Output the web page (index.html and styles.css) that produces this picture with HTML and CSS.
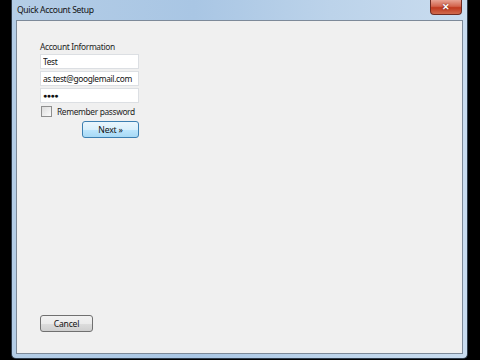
FILE: index.html
```html
<!DOCTYPE html>
<html lang="en">
<head>
    <meta charset="UTF-8">
    <title>Quick Account Setup</title>
    <link rel="stylesheet" href="styles.css">
</head>
<body>
    <div class="window">
        <div class="titlebar">
            <span class="title">Quick Account Setup</span>
            <button class="close-button">&#x2715;</button>
        </div>
        <div class="client">
            <div class="form">
                <div class="label">Account Information</div>
                <input type="text" class="field" value="Test">
                <input type="text" class="field" value="as.test@googlemail.com">
                <input type="text" class="field password" value="&#x25CF;&#x25CF;&#x25CF;&#x25CF;">
                <label class="remember"><span class="checkbox"></span>Remember password</label>
                <div class="actions">
                    <button class="win-button next-button">Next &raquo;</button>
                </div>
            </div>
            <div class="footer">
                <button class="win-button cancel-button">Cancel</button>
            </div>
        </div>
    </div>
</body>
</html>
```

FILE: styles.css
```css
body {
    margin: 0;
    padding: 0;
    background-color: #000;
    font-family: "Noto Sans", "Open Sans", sans-serif;
    font-size: 8.4px;
    letter-spacing: -0.35px;
    color: #1e1e1e;
    height: 360px;
    overflow: hidden;
}

.window {
    margin-left: 11px;
    width: 457px;
    height: 359px;
    box-sizing: border-box;
    border: 1px solid #2e3b4a;
    border-top: none;
    border-radius: 0 0 5px 5px;
    background: linear-gradient(90deg, #b4cde6, #a9c6e4 40%, #bcd3ea 70%, #c9dcef);
    display: flex;
    flex-direction: column;
    padding: 0 4px 4px 4px;
}

.titlebar {
    height: 20px;
    display: flex;
    align-items: flex-start;
    justify-content: space-between;
    flex-shrink: 0;
}

.title {
    padding: 4px 0 0 1px;
    font-size: 8.6px;
    color: #111;
}

.close-button {
    width: 32px;
    height: 15px;
    margin-right: 1px;
    border: 1px solid #6e2b22;
    border-top: none;
    border-radius: 0 0 4px 4px;
    background: linear-gradient(#e8a394, #d3644d 45%, #c0391f 55%, #d06a4e);
    color: #fff;
    font-size: 9px;
    font-weight: bold;
    line-height: 12px;
    padding: 0;
    text-shadow: 0 0 2px #5a1a10;
}

.client {
    flex: 1;
    background-color: #f0f0f0;
    border: 1px solid #7d8a99;
    display: flex;
    flex-direction: column;
    justify-content: space-between;
    padding: 19px 0 21px 23px;
}

.form {
    width: 99px;
    display: flex;
    flex-direction: column;
}

.label {
    height: 13px;
    line-height: 13px;
    margin-bottom: 1px;
}

.field {
    height: 15px;
    box-sizing: border-box;
    border: 1px solid #dcdfe3;
    background-color: #fff;
    font-family: inherit;
    font-size: 8.4px;
    letter-spacing: -0.35px;
    color: #111;
    padding: 0 2px;
    margin: 0 0 2px 0;
}

.password {
    font-size: 7px;
    letter-spacing: -0.5px;
}

.remember {
    display: flex;
    align-items: center;
    white-space: nowrap;
    height: 12px;
    margin-top: 0;
}

.checkbox {
    width: 9px;
    height: 9px;
    flex-shrink: 0;
    border: 1px solid #8f8f8f;
    background: linear-gradient(135deg, #dcdcdc, #fbfbfb);
    margin: 0 5px 0 1px;
}

.actions {
    display: flex;
    justify-content: flex-end;
    margin-top: 4px;
}

.win-button {
    height: 17px;
    border: 1px solid #707070;
    border-radius: 3px;
    font-family: inherit;
    font-size: 8.6px;
    letter-spacing: -0.2px;
    color: #111;
    padding: 0;
}

.next-button {
    width: 57px;
    border-color: #3c7fb1;
    background: linear-gradient(#eaf6fd, #d9f0fc 50%, #bee6fd 51%, #a7d9f5);
}

.cancel-button {
    width: 53px;
    background: linear-gradient(#f2f2f2, #ebebeb 50%, #dddddd 51%, #cfcfcf);
}
```
